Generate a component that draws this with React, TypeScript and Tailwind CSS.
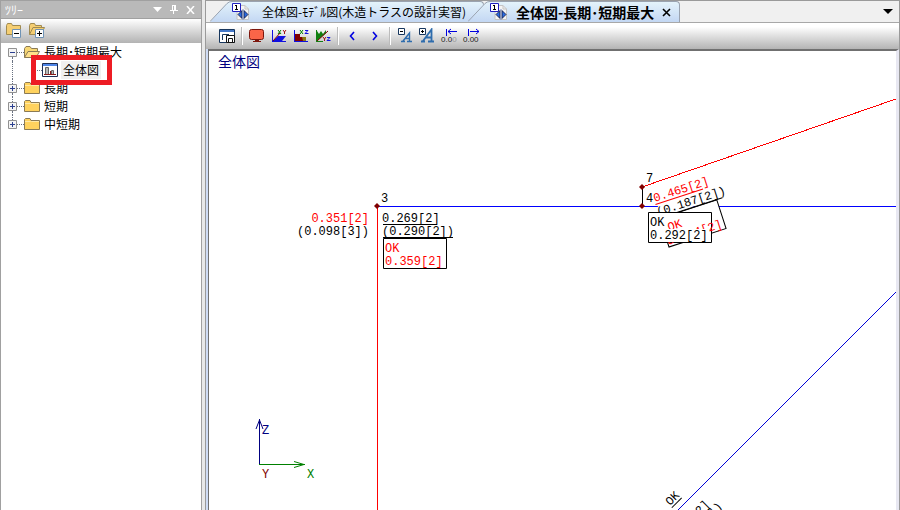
import type { ReactNode } from "react";

const FOLDERS = ["長期", "短期", "中短期"];

function FolderOpen() {
    return <svg width="16" height="14" viewBox="0 0 16 14" className="shrink-0">
        <path d="M.5 12.500V3.500L2 1.500H6L7.500 3.500H13.500V6" fill="#f7d774" stroke="#8a7a55" />
        <path d="M.5 12.500L4 6.500H15.500L12 12.500Z" fill="#ffe08a" stroke="#8a7a55" />
    </svg>
}

function FolderClosed() {
    return <svg width="16" height="14" viewBox="0 0 16 14" className="shrink-0">
        <path d="M.5 12.500V2.500L1.500 1.500H6L7 3.500H15.500V12.500Z" fill="#ffd25e" stroke="#8a7a55" />
        <path d="M1 4.500H6.500L7.500 4.500H15" fill="none" stroke="#ffe9a6" />
    </svg>
}

function FolderAction({ plus }: { plus?: boolean }) {
    return <svg width="16" height="16" viewBox="0 0 16 16">
        {plus
            ? <path d="M.5 11.500V2.500L1.500 .5H5.500L6.500 2.500H12.500V4.500H15.500L12 11.500H.5L4 4.500H13" fill="#f5ce72" stroke="#a08a50" />
            : <path d="M.5 11.500V2.500L1.500 .5H5.500L6.500 2.500H14.500V11.500Z" fill="#f5ce72" stroke="#a08a50" />}
        <path d="M6.500 6.500H14.500V14.500H6.500Z" fill="#fff" stroke="#6f93b5" />
        <path d="M8 10.500H13" stroke="#000" />
        {plus && <path d="M10.500 8V13" stroke="#000" />}
    </svg>
}

function ViewIcon() {
    return <svg width="16" height="14" viewBox="0 0 16 14" className="shrink-0">
        <path d="M.5 .5H15.500V13.500H.5Z" fill="#fff" stroke="#1f2f55" />
        <path d="M1 1H15V3H1Z" fill="#4f86e8" />
        <path d="M3.500 4.500H6.500V11.500H3.500ZM9.500 7.500H11.500V11.500H9.500Z" fill="#b9b9b9" stroke="#666" />
        <path d="M2 11.500H14M8.500 8V11" stroke="#8b1a1a" />
    </svg>
}

function DocIcon() {
    return <svg width="18" height="18" viewBox="0 0 18 18" className="shrink-0">
        <path d="M5 2.500H13L16.500 6V16.500H5Z" fill="#f4f4f4" stroke="#c4c4c4" />
        <path d="M13 2.500V6H16.500" fill="none" stroke="#c4c4c4" />
        <path d="M.5 .5H8.500V8.500H.5Z" fill="#fff" stroke="#2020c0" />
        <path d="M3 2H5V6H6V7H3V6H4V3H3Z" fill="#000" shapeRendering="crispEdges" />
        <path d="M10 7.500L6 11.500L10 15.500ZM12 7.500L16 11.500L12 15.500Z" fill="#2a6be0" stroke="#101030" strokeWidth=".8" />
        <path d="M11 6V17" stroke="#7d8fc0" />
    </svg>
}

function Toggle({ open, label, first, last }: { open?: boolean, label: string, first?: boolean, last?: boolean }) {
    return <div className="flex w-[9px] shrink-0 flex-col items-center">
        <span className={first ? "h-[5px]" : "h-[5px] border-l border-dotted border-gray-500"} />
        <button aria-label={label} className="block">
            <svg width="9" height="9" viewBox="0 0 9 9" className="block">
                <path d="M.5 .5H8.500V8.500H.5Z" fill="#f4f4f4" stroke="#919191" />
                <path d={open ? "M2 4.500H7" : "M2 4.500H7M4.500 2V7"} stroke="#2b3f8f" />
            </svg>
        </button>
        <span className={last ? "h-1" : "h-1 border-l border-dotted border-gray-500"} />
    </div>
}

function TreePanel() {
    return <aside className="flex w-[202px] shrink-0 flex-col border-x border-[#a0a0a0] bg-white">
        <header className="flex h-[19px] shrink-0 items-center border-y border-[#a0a0a0] bg-[#b9b9b9] pr-[2px] pl-1 text-xs text-white">
            <h2 className="grow">ﾂﾘｰ</h2>
            <button aria-label="メニュー" className="px-1">
                <svg width="9" height="5" viewBox="0 0 9 5"><path d="M0 0H9L4.500 5Z" fill="#fff" /></svg>
            </button>
            <button aria-label="固定" className="px-1">
                <svg width="8" height="9" viewBox="0 0 8 9" shapeRendering="crispEdges">
                    <path d="M2 0H6V5H8V6H4V9H3V6H0V5H2ZM3 1V5H4V1Z" fill="#fff" fillRule="evenodd" />
                </svg>
            </button>
            <button aria-label="閉じる" className="px-1">
                <svg width="9" height="8" viewBox="0 0 9 8"><path d="M1 0L8 8M8 0L1 8" stroke="#fff" strokeWidth="1.500" /></svg>
            </button>
        </header>
        <div className="flex h-6 shrink-0 items-center gap-[7px] bg-linear-to-b from-white to-[#b3b3b3] pl-[5px]">
            <button aria-label="すべて閉じる"><FolderAction /></button>
            <button aria-label="すべて開く"><FolderAction plus /></button>
        </div>
        <ul className="grow bg-white pl-[7px] text-xs leading-[18px] text-black">
            <li>
                <div className="flex h-[18px] items-center">
                    <Toggle open first label="長期･短期最大を閉じる" />
                    <span className="w-[7px] border-t border-dotted border-gray-500" />
                    <FolderOpen />
                    <span className="ml-1">長期･短期最大</span>
                </div>
                <ul>
                    <li className="flex h-[18px] items-center">
                        <span className="ml-1 h-full border-l border-dotted border-gray-500" />
                        <div className="relative ml-6 flex items-center">
                            <span className="w-[5px] border-t border-dotted border-gray-500" />
                            <ViewIcon />
                            <button className="ml-[3px] bg-[#f0f0f0] px-[2px]">全体図</button>
                            <span className="absolute -top-[6px] -left-[6px] h-[30px] w-[81px] border-[5px] border-[#ed1c24]" />
                        </div>
                    </li>
                </ul>
            </li>
            {
                FOLDERS.map((name, i) => (
                    <li key={name} className="flex h-[18px] items-center">
                        <Toggle label={name + "を開く"} last={i === FOLDERS.length - 1} />
                        <span className="w-[7px] border-t border-dotted border-gray-500" />
                        <FolderClosed />
                        <span className="ml-1">{name}</span>
                    </li>
                ))
            }
        </ul>
    </aside>
}

function TabSlant() {
    return <svg width="22" height="21" viewBox="0 0 22 21" className="block shrink-0">
        <defs>
            <linearGradient id="slant" x1="0" y1="0" x2="0" y2="1">
                <stop offset="0" stopColor="#e4f3fb" />
                <stop offset="1" stopColor="#c3d7f3" />
            </linearGradient>
        </defs>
        <path d="M0 21L17 2Q19 0 22 0V21Z" fill="url(#slant)" />
        <path d="M0 20.500L17 2.500Q19 .5 22 .5" fill="none" stroke="#9aa3b0" />
    </svg>
}

function Tab({ children }: { children: ReactNode }) {
    return <div className="-ml-4 flex h-[21px] shrink-0">
        <TabSlant />
        <div className="flex items-center rounded-tr-sm border-t border-r border-[#9aa3b0] bg-linear-to-b from-[#e4f3fb] to-[#c3d7f3]">
            {children}
        </div>
    </div>
}

function Tool({ label, children }: { label: string, children: ReactNode }) {
    return <button aria-label={label} title={label} className="flex h-[22px] w-[22px] shrink-0 items-center justify-center">
        <svg width="18" height="16" viewBox="0 0 18 16">{children}</svg>
    </button>
}

function Separator() {
    return <span className="mx-[3px] h-[18px] w-[2px] shrink-0 border-l border-[#bcbcbc] bg-white" />
}

function Axes({ children }: { children?: ReactNode }) {
    return <>
        {children}
        <path d="M2.500 2V14M2 13.500H16" stroke="#1010e0" />
    </>
}

const TINY_X = "M0 0L3 4M3 0L0 4";
const TINY_Y = "M0 0L1.500 2L3 0M1.500 2V4";
const TINY_Z = "M0 .5H3L0 3.500H3.500";

function Toolbar() {
    return <div className="flex h-[26px] shrink-0 items-center bg-linear-to-b from-white from-15% to-[#b4b4b4] pl-[10px]">
        <Tool label="表示設定">
            <path d="M1.500 1.500H16.500V14.500H1.500Z" fill="#fff" stroke="#17365d" />
            <path d="M2 2H16V4H2Z" fill="#4478c8" />
            <path d="M4.500 12V6.500H11" fill="none" stroke="#17365d" />
            <path d="M8.500 7.500H16.500V14.500H8.500Z" fill="#fff" stroke="#111" />
            <path d="M10.500 14V10.500H14.500V14" fill="none" stroke="#111" />
        </Tool>
        <Separator />
        <Tool label="画面">
            <rect x="1.500" y="1.500" width="14" height="10" rx="2" fill="#fa6548" stroke="#7d160c" />
            <path d="M7 12H11V13H13V14H5V13H7Z" fill="#7d160c" />
        </Tool>
        <Tool label="XY平面">
            <Axes><path d="M3 13L8 8H16L12 13Z" fill="#1010e0" /><path d="M3 13L10 5" stroke="#800000" /></Axes>
            <path d={TINY_X} transform="translate(8 2)" stroke="#008000" fill="none" />
            <path d={TINY_Y} transform="translate(13 2)" stroke="#a01010" fill="none" />
        </Tool>
        <Tool label="XZ平面">
            <Axes><path d="M3 6H8V9H11V13H3Z" fill="#800000" /><path d="M10 9H14V13H11Z" fill="#8a7a10" /></Axes>
            <path d={TINY_X} transform="translate(8 2)" stroke="#008000" fill="none" />
            <path d={TINY_Z} transform="translate(13 2)" stroke="#1010e0" fill="none" />
        </Tool>
        <Tool label="YZ平面">
            <path d="M3 13V3L5 6L7 3L9 6L12 2V5L3 13Z" fill="#118011" />
            <path d="M2.500 2V14M2 13.500H9" stroke="#118011" />
            <path d="M3 13L14 3" stroke="#800000" />
            <path d={TINY_Y} transform="translate(9 9)" stroke="#a01010" fill="none" />
            <path d={TINY_Z} transform="translate(13 9)" stroke="#1010e0" fill="none" />
        </Tool>
        <Separator />
        <Tool label="前へ"><path d="M10 4L6.500 8L10 12" fill="none" stroke="#0000e0" strokeWidth="1.600" /></Tool>
        <Tool label="次へ"><path d="M7 4L10.500 8L7 12" fill="none" stroke="#0000e0" strokeWidth="1.600" /></Tool>
        <Separator />
        <Tool label="文字を小さく">
            <path d="M2.500 .5H8.500V6.500H2.500Z" fill="#fff" stroke="#17365d" />
            <path d="M4 3.500H7" stroke="#000" />
            <path d="M5 13.500H9M11 13.500H16M7 13L13.500 5V13M9 10.500H13" fill="none" stroke="#2f6dad" strokeWidth="1.400" />
        </Tool>
        <Tool label="文字を大きく">
            <path d="M3 13.500H7M10 13.500H16M5 13L13.500 1.500V13M8 9.500H13" fill="none" stroke="#2f6dad" strokeWidth="1.800" />
            <path d="M1.500 .5H7.500V6.500H1.500Z" fill="#fff" stroke="#17365d" />
            <path d="M3 3.500H6M4.500 2V5" stroke="#000" />
        </Tool>
        <Tool label="小数桁を減らす">
            <path d="M6.500 1V8M8 3.500H17M11 1L8 3.500L11 6" fill="none" stroke="#0000e0" />
            <text x="1" y="14" className="fill-[#222] font-['Liberation_Sans',sans-serif] text-[8px]">0.0<tspan className="fill-[#999]">0</tspan></text>
        </Tool>
        <Tool label="小数桁を増やす">
            <path d="M6.500 1V8M8 3.500H17M14 1L17 3.500L14 6" fill="none" stroke="#0000e0" />
            <text x="1" y="14" className="fill-[#222] font-['Liberation_Sans',sans-serif] text-[8px]">0.00</text>
        </Tool>
    </div>
}

function Node({ x, y }: { x: number, y: number }) {
    return <path d="M0 -3L3 0L0 3L-3 0Z" transform={`translate(${x} ${y})`} fill="#800000" />
}

function Drawing() {
    return <svg role="img" aria-label="全体図" className="block h-full w-full font-['Liberation_Mono','Noto_Sans_CJK_JP',monospace] text-xs">
        <text x="9" y="16" fill="#000080" className="text-sm">全体図</text>

        {/* members */}
        <g fill="none" shapeRendering="crispEdges">
            <path d="M168.500 155V2000" stroke="#f00" />
            <path d="M168 155.500H2000" stroke="#00f" />
            <path d="M433 136L687 48L1687 -298" stroke="#f00" />
            <path d="M433.500 136V155" stroke="#000" />
            <path d="M1687 -759L-313 1241" stroke="#0000d8" />
        </g>

        {/* node 3 */}
        <Node x={168} y={155} />
        <text x="172" y="151">3</text>
        <text x="160" y="171" textAnchor="end" fill="#f00">0.351[2]</text>
        <text x="160" y="184" textAnchor="end">(0.098[3])</text>
        <text x="173" y="171">0.269[2]</text>
        <text x="173" y="184">(0.290[2])</text>
        <path d="M174 173.500H228M174 186.500H244" stroke="#000" />
        <path d="M174.500 187.500H237.500V217.500H174.500Z" fill="#fff" stroke="#000" />
        <text x="176" y="201" fill="#f00">OK</text>
        <text x="176" y="214" fill="#f00">0.359[2]</text>

        {/* nodes 4 and 7 */}
        <text x="437" y="131">7</text>
        <text x="437" y="151">4</text>
        <g transform="translate(460 196) rotate(-18)">
            <path d="M0 -30H60V0H0Z" fill="#fff" stroke="#000" />
        </g>
        <g transform="translate(446 152) rotate(-18)">
            <path d="M0 -9H50V1H0Z" fill="#fff" />
            <text y="-1" fill="#f00">0.465[2]</text>
            <path d="M0 1.500H50" stroke="#f00" />
        </g>
        <g transform="translate(452 165) rotate(-18)">
            <path d="M0 -11H62V1H0Z" fill="#fff" />
            <text x="-3" y="-1">(0.187[2])</text>
            <path d="M0 1.500H64" stroke="#000" />
        </g>
        <path d="M439.500 161.500H502.500V191.500H439.500Z" fill="#fff" stroke="#000" />
        <text x="441" y="175">OK</text>
        <text fill="#f00" transform="translate(460 180) rotate(-18)">OK</text>
        <text fill="#f00" transform="translate(459 194) rotate(-18)">0.314[2]</text>
        <path d="M440 178H500V191H440Z" fill="#fff" />
        <text x="441" y="188">0.292[2]</text>
        <Node x={433} y={136} />
        <Node x={433} y={155} />

        {/* results along the brace */}
        <g transform="translate(461 455) rotate(-45)">
            <text>OK</text>
            <path d="M0 2.500H14" stroke="#000" />
        </g>
        <text textAnchor="end" transform="translate(501 454) rotate(-45)">[2]</text>
        <text textAnchor="end" transform="translate(514 456) rotate(-45)">[2])</text>

        {/* coordinate axes */}
        <g fill="none">
            <path d="M50.500 413V368M47 378L50.500 369L54 378" stroke="#000080" />
            <path d="M50 413.500H96M85 410.500L95 413.500L85 416.500" stroke="#008000" />
        </g>
        <text x="53" y="383" fill="#000080">Z</text>
        <text x="53" y="427" fill="#800000">Y</text>
        <text x="98" y="427" fill="#008000">X</text>
    </svg>
}

export default function App() {
    return <div className="flex h-screen overflow-hidden bg-[#e8e8e8] font-['Noto_Sans_CJK_JP',sans-serif]">
        <TreePanel />
        <main className="ml-[3px] flex min-w-0 grow flex-col border-x border-t border-[#9a9a9a] bg-[#cfdcf5]">
            <div className="flex h-[22px] shrink-0 items-end border-b border-[#a8a8a8] bg-[#f0f0f0] pl-5">
                <Tab>
                    <button className="flex items-center gap-3 pr-[17px] text-xs">
                        <DocIcon />
                        全体図-ﾓﾃﾞﾙ図(木造トラスの設計実習)
                    </button>
                </Tab>
                <Tab>
                    <button className="flex items-center gap-2 text-sm font-bold">
                        <DocIcon />
                        全体図-長期･短期最大
                    </button>
                    <button aria-label="タブを閉じる" className="px-2">
                        <svg width="9" height="9" viewBox="0 0 9 9"><path d="M1 1L8 8M8 1L1 8" stroke="#000" strokeWidth="1.600" /></svg>
                    </button>
                </Tab>
                <button aria-label="タブ一覧" className="mr-[6px] mb-2 ml-auto">
                    <svg width="10" height="5" viewBox="0 0 10 5" className="block"><path d="M0 0H10L5 5Z" fill="#000" /></svg>
                </button>
            </div>
            <Toolbar />
            <div className="ml-[2px] min-h-0 grow border-t-2 border-r-[3px] border-l border-t-[#707070] border-r-[#e8e8f2] border-l-[#707070] bg-white">
                <Drawing />
            </div>
        </main>
    </div>
}
